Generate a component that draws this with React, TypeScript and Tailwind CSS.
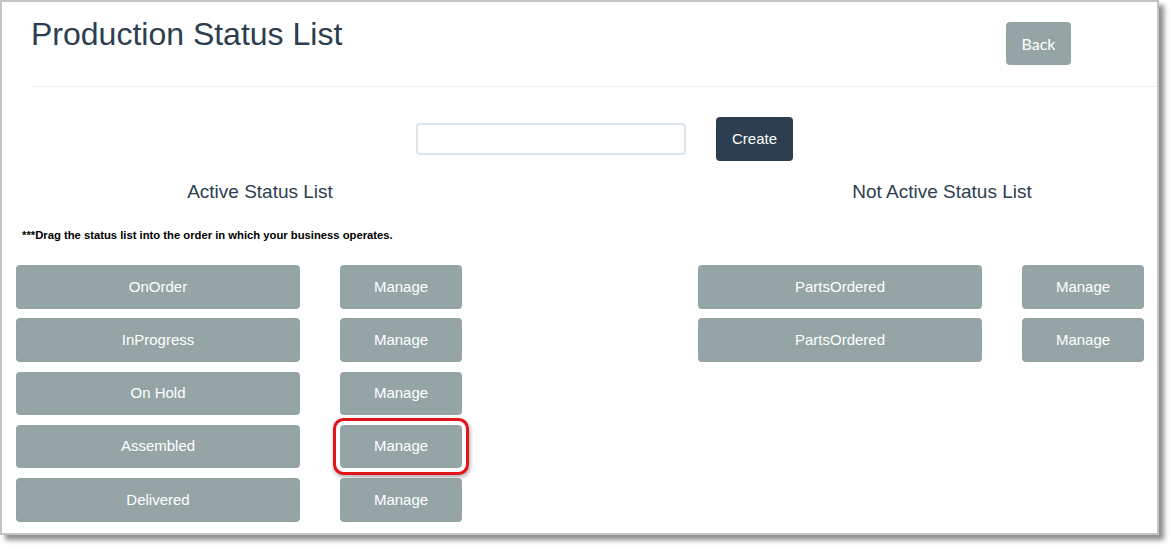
import React from 'react'

const ACTIVE = ['OnOrder', 'InProgress', 'On Hold', 'Assembled', 'Delivered']
const INACTIVE = ['PartsOrdered', 'PartsOrdered']

function StatusRow({ name, flagged }: { name: string; flagged?: boolean }) {
  return (
    <div className="flex gap-[40px]">
      <button className="w-[284px] h-[43.5px] rounded-[4px] bg-[#95a5a6] text-white text-[15px]">
        {name}
      </button>
      <button
        className={`w-[122px] h-[43.5px] rounded-[4px] bg-[#95a5a6] text-white text-[15px] ${
          flagged ? 'shadow-[0_0_0_4px_#ffffff,0_0_0_7px_#e3141b,1px_2px_4px_7px_rgba(0,0,0,0.35)]' : ''
        }`}
      >
        Manage
      </button>
    </div>
  )
}

export default function App() {
  return (
    <div className="w-[1174px] h-[549px] bg-white font-['Liberation_Sans',Arial,sans-serif]">
      <div className="w-[1159px] h-[535px] border-2 border-[#c4c4c4] bg-white overflow-hidden shadow-[5px_5px_5px_rgba(0,0,0,0.45)]">

        {/* Header */}
        <div className="h-[84px] flex justify-between items-start pl-[29px] pr-[86px]">
          <h1 className="mt-[15px] text-[32px] leading-[1.1] text-[#2c3e50]">Production Status List</h1>
          <button className="mt-[20px] w-[65px] h-[43px] rounded-[4px] bg-[#95a5a6] text-white text-[16px] font-['Lato',sans-serif]">
            Back
          </button>
        </div>
        <div className="ml-[30px] border-t border-[#eeeeee]" />

        {/* Create */}
        <div className="mt-[30px] flex items-center gap-[30px] pl-[414px]">
          <input className="w-[270px] h-[32px] border-2 border-[#dce4ec] rounded-[4px] outline-none px-2" />
          <button className="w-[77px] h-[44px] rounded-[4px] bg-[#2c3e50] text-white text-[15px]">Create</button>
        </div>

        {/* Column headings */}
        <div className="mt-[20px] flex">
          <div className="w-[682px] shrink-0 pl-[14px]">
            <h2 className="w-[488px] text-center text-[19px] leading-[22px] text-[#2c3e50]">Active Status List</h2>
          </div>
          <div className="w-[682px] shrink-0 pl-[14px]">
            <h2 className="w-[488px] text-center text-[19px] leading-[22px] text-[#2c3e50]">Not Active Status List</h2>
          </div>
        </div>

        <p className="mt-[26px] pl-[20px] text-[11.25px] leading-[13px] font-bold text-black">
          ***Drag the status list into the order in which your business operates.
        </p>

        {/* Lists */}
        <div className="mt-[23px] flex">
          <div className="w-[682px] shrink-0 pl-[14px] flex flex-col gap-[9.75px]">
            {ACTIVE.map(s => (
              <StatusRow key={s} name={s} flagged={s === 'Assembled'} />
            ))}
          </div>
          <div className="w-[682px] shrink-0 pl-[14px] flex flex-col gap-[9.75px]">
            {INACTIVE.map((s, i) => (
              <StatusRow key={i} name={s} />
            ))}
          </div>
        </div>

      </div>
    </div>
  )
}
